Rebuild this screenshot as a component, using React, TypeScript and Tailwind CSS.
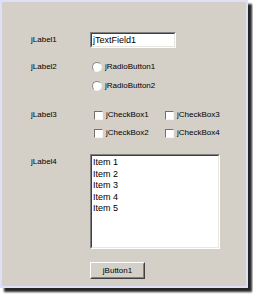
import React from "react";

const font = { fontFamily: '"Liberation Sans", Arial, sans-serif' };

function Radio({ label }: { label: string }) {
  return (
    <div className="flex items-center h-[12px]">
      <div className="w-[10px] h-[10px] rounded-full border border-t-[#8a8a8a] border-l-[#8a8a8a] border-b-[#f4f4f4] border-r-[#f4f4f4] bg-white ml-[2px]" />
      <span className="ml-[3px] text-[8px] text-black leading-none">{label}</span>
    </div>
  );
}

function Check({ label }: { label: string }) {
  return (
    <div className="flex items-center h-[12px] w-[71px]">
      <div className="w-[9px] h-[9px] border border-t-[#707070] border-l-[#707070] border-b-[#f4f4f4] border-r-[#f4f4f4] bg-white ml-[4px]" />
      <span className="ml-[3px] text-[8px] text-black leading-none">{label}</span>
    </div>
  );
}

export default function App() {
  return (
    <div className="w-[253px] h-[295px] bg-white relative overflow-hidden" style={font}>
      <div className="w-[248px] h-[288px] border-2 border-[#dfdff8] bg-[#d4d0c8] shadow-[4px_4px_2px_rgba(0,0,0,0.85)] flex flex-col pt-[30px] pl-[29px]">
        {/* Row 1 */}
        <div className="flex items-center h-[16px]">
          <span className="w-[59px] text-[8px] text-black">jLabel1</span>
          <div className="w-[86px] h-[16px] border border-t-[#808080] border-l-[#808080] border-b-white border-r-white">
            <div className="w-full h-full border border-t-[#404040] border-l-[#404040] border-b-[#e8e6e0] border-r-[#e8e6e0] bg-white flex items-center pl-[1px]">
              <span className="text-[9px] text-black leading-none">jTextField1</span>
            </div>
          </div>
        </div>
        {/* Row 2 */}
        <div className="flex items-center mt-[13px]">
          <span className="w-[59px] text-[8px] text-black">jLabel2</span>
          <Radio label="jRadioButton1" />
        </div>
        <div className="flex items-center mt-[7px] pl-[59px]">
          <Radio label="jRadioButton2" />
        </div>
        {/* Checkboxes */}
        <div className="flex items-center mt-[17px]">
          <span className="w-[59px] text-[8px] text-black">jLabel3</span>
          <Check label="jCheckBox1" />
          <Check label="jCheckBox3" />
        </div>
        <div className="flex items-center mt-[6px] pl-[59px]">
          <Check label="jCheckBox2" />
          <Check label="jCheckBox4" />
        </div>
        {/* List */}
        <div className="flex items-start mt-[15px]">
          <span className="w-[59px] text-[8px] text-black mt-[2px]">jLabel4</span>
          <div className="w-[130px] h-[95px] border border-t-[#808080] border-l-[#808080] border-b-white border-r-white">
            <div className="w-full h-full border border-t-[#404040] border-l-[#404040] border-b-[#e8e6e0] border-r-[#e8e6e0] bg-white pt-[1px] pl-[1px] flex flex-col">
              {["Item 1", "Item 2", "Item 3", "Item 4", "Item 5"].map((t) => (
                <span key={t} className="text-[9px] leading-[11.5px] text-black">{t}</span>
              ))}
            </div>
          </div>
        </div>
        {/* Button */}
        <div className="flex mt-[13px] pl-[59px]">
          <div className="w-[55px] h-[17px] border border-t-white border-l-white border-b-[#404040] border-r-[#404040]">
            <div className="w-full h-full border border-t-[#d4d0c8] border-l-[#d4d0c8] border-b-[#808080] border-r-[#808080] flex items-center justify-center">
              <span className="text-[8px] text-black leading-none">jButton1</span>
            </div>
          </div>
        </div>
      </div>
    </div>
  );
}
